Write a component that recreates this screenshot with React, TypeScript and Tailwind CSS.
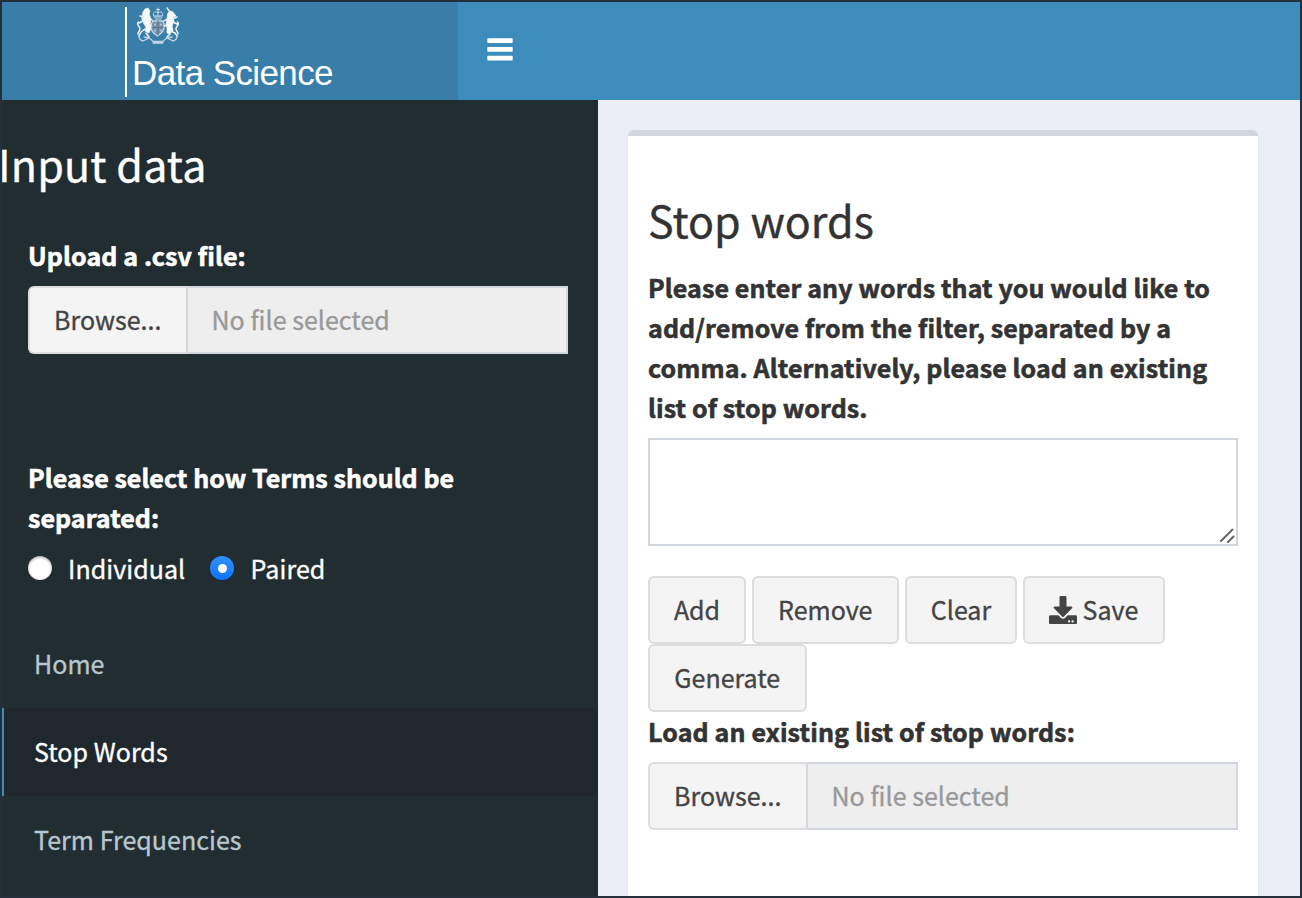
import type { ReactNode } from "react";
import { FaDownload } from "react-icons/fa";

function Crest() {
  return (
    <svg viewBox="0 0 44 38" className="block h-[38px] w-[44px]" fill="none" stroke="#eef4f8" strokeLinecap="round" strokeLinejoin="round">
      {/* crown */}
      <path d="M17.500 8.500c-1-3 1.500-4.500 4.500-3 3-1.500 5.500 0 4.500 3z" strokeWidth="1" opacity=".75" />
      <path d="M22 1v7M20.500 2.500h3M18 10h8M19 12h6" strokeWidth="1" opacity=".8" />
      {/* lion */}
      <path d="M7 5l2-3 3-1 2 3-1 3 2 5-1 5 1 4-2 5-4-2 1-4-2-3-2-5z" fill="#f8fbfc" strokeWidth=".8" />
      <path d="M8 10l-4-1M7 14l-4 2M13 11l3 2M12 17l4 2M9 22l-4 3-2 4M10 26l3 4M2.500 15c-3 3 2 4 1.500 7s-2 2-2 5" strokeWidth="1.500" />
      {/* unicorn */}
      <path d="M32 6l2-2 3 1 3 4-3 1 1 4-2 5 1 4-3 4-3-1v-5l-1-4 1-5z" fill="#f8fbfc" strokeWidth=".8" />
      <path d="M34 5l-3-4M36 12l5-2M37 15l4 2M31 12l-3 2M32 18l-4 1M35 24l4 2 2 3M34 27l-3 3M41.500 15c3 3-2 4-1.500 7s2 2 2 5" strokeWidth="1.500" />
      {/* shield */}
      <path d="M17 14h10q1.500 3 1 7t-6.500 8q-6-4-6.500-8t2-7z" fill="#8399a9" strokeWidth="1.300" strokeDasharray="1.500 1" opacity=".8" />
      <path d="M22 14v14M17 20.500h10" stroke="#5b7589" strokeWidth="1" />
      <path d="M19 17v1M25 17v1M19 23v1M25 23v1" strokeWidth="1.200" opacity=".8" />
      {/* motto scroll */}
      <path d="M3 29q0 4 4 5l6-3q3 2 4 3.500h10q1-1.500 4-3.500l6 3q4-1 4-5M8 30l5 1M36 30l-5 1M17 36h10" strokeWidth="1.300" opacity=".75" />
    </svg>
  );
}

function Button({ children, className }: { children: ReactNode; className: string }) {
  return (
    <button className={`flex h-[68px] items-center justify-center rounded-[6px] border-2 border-[#ddd] bg-[#f4f4f4] pb-[3px] text-[#444] ${className}`}>
      {children}
    </button>
  );
}

function FileInput() {
  return (
    <div className="flex h-[68px] w-full">
      <button className="w-[158px] shrink-0 rounded-l-[6px] border-2 border-r-0 border-[#ddd] bg-[#f4f4f4] pb-[3px] pr-[0.5px] text-[#444]">
        Browse...
      </button>
      <div className="flex flex-1 items-center border-2 border-[#d2d6de] bg-[#eee] pb-[3px] pl-[23.5px] tracking-[0.04px] text-[#999]">
        No file selected
      </div>
    </div>
  );
}

export default function App() {
  return (
    <div className="flex h-[898px] w-[1302px] flex-col overflow-hidden border-2 border-[#22303c] bg-[#ebeef7] font-['Noto_Sans_CJK_SC',sans-serif] text-[25px] leading-[40px] [-webkit-text-stroke:0.35px]">
      <header className="flex h-[98px] shrink-0 bg-[#3c8dbc]">
        <div className="flex w-[456px] bg-[#387ea9] pl-[123px] pt-[5px]">
          <div className="h-[90px] border-l-2 border-white pl-[6px]">
            <div className="ml-[3px]"><Crest /></div>
            <div className="-ml-[1px] mt-[8px] whitespace-nowrap font-['Liberation_Sans',sans-serif] text-[35px] leading-[40px] tracking-[-0.6px] text-white [-webkit-text-stroke:0px]">Data Science</div>
          </div>
        </div>
        <button className="ml-[29px] mt-[36px] h-[23px]" aria-label="Toggle navigation">
          <svg viewBox="0 0 26 23" className="block h-[23px] w-[26px]" fill="#fff">
            <rect x=".3" y=".3" width="25.400" height="4.700" rx=".8" />
            <rect x=".3" y="9" width="25.400" height="4.700" rx=".8" />
            <rect x=".3" y="17.800" width="25.400" height="4.700" rx=".8" />
          </svg>
        </button>
      </header>

      <div className="flex min-h-0 flex-1">
        <aside className="w-[596px] shrink-0 bg-[#222d32] text-white">
          <h2 className="-ml-[4px] mt-[37px] h-[53px] text-[43px] leading-[53px] tracking-[0.15px]">Input data</h2>
          <div className="mt-[45px] px-[26px] pr-[30px]">
            <label className="block font-bold tracking-[0.1px] [-webkit-text-stroke:0.6px]">Upload a .csv file:</label>
            <div className="mt-[11px]"><FileInput /></div>
            <div className="mt-[103px] font-bold tracking-[0.05px] [-webkit-text-stroke:0.6px]">Please select how Terms should be separated:</div>
            <div className="mt-[11px] flex items-center">
              <span className="h-[24px] w-[24px] rounded-full bg-white shadow-[inset_0_1px_3px_rgba(0,0,0,0.4)]" />
              <span className="ml-[16px] w-[142px] tracking-[0.05px]">Individual</span>
              <span className="flex h-[24px] w-[24px] items-center justify-center rounded-full bg-linear-to-b from-[#2f8fff] to-[#0a75ff]">
                <span className="h-[9px] w-[9px] rounded-full bg-white" />
              </span>
              <span className="ml-[16.5px] tracking-[0.1px]">Paired</span>
            </div>
          </div>
          <nav className="mt-[32px] tracking-[0.04px] text-[#b8c7ce]">
            <a className="flex h-[88px] items-center border-l-2 border-transparent pb-[2px] pl-[30px]">Home</a>
            <a className="flex h-[88px] items-center border-l-2 border-[#3c8dbc] bg-[#20282e] pb-[2px] pl-[30px] text-white">Stop Words</a>
            <a className="flex h-[88px] items-center border-l-2 border-transparent pb-[2px] pl-[30px]">Term Frequencies</a>
          </nav>
        </aside>

        <main className="pl-[30px] pt-[30px]">
          <section className="h-[800px] w-[630px] rounded-[6px] border-t-[6px] border-[#d2d6de] bg-white px-[20px] text-[#333] shadow-[0_1px_2px_rgba(0,0,0,0.1)]">
            <h2 className="pt-[57px] text-[43px] leading-[53px]">Stop words</h2>
            <p className="mt-[21px] whitespace-nowrap font-bold tracking-[0.11px] [-webkit-text-stroke:0.6px]">
              Please enter any words that you would like to<br />
              add/remove from the filter, separated by a<br />
              comma. Alternatively, please load an existing<br />
              list of stop words.
            </p>
            <div className="mt-[11px] flex h-[108px] w-[590px] items-end justify-end border-2 border-[#d2d6de] bg-white pb-[1px] pr-[1px]">
              <svg viewBox="0 0 16 16" className="h-[16px] w-[16px]" stroke="#666" strokeWidth="2" strokeLinecap="round">
                <path d="M2 14L13.500 2.500M9 15l5.500-5.500" />
              </svg>
            </div>
            <div className="mt-[30px] flex w-[590px] flex-wrap gap-x-[6px]">
              <Button className="w-[98px]">Add</Button>
              <Button className="w-[147px] pr-[0.5px]">Remove</Button>
              <Button className="w-[112px]">Clear</Button>
              <Button className="w-[142px] pr-[1px]"><FaDownload className="mr-[6px] mt-[2px] size-[28px]" />Save</Button>
              <Button className="w-[159px] pr-[0.5px]">Generate</Button>
            </div>
            <label className="-mt-[1px] mb-[11px] block font-bold tracking-[0.13px] [-webkit-text-stroke:0.6px]">Load an existing list of stop words:</label>
            <FileInput />
          </section>
        </main>
      </div>
    </div>
  );
}
